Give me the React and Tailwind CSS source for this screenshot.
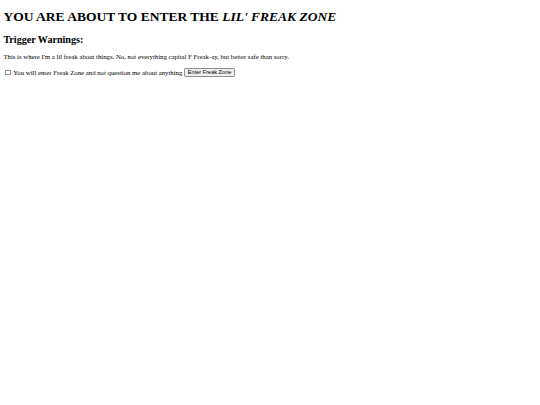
import { useState } from 'react';

export default function App() {
  const [agreed, setAgreed] = useState(false);

  return (
    <div className="min-h-[405px] bg-white p-[3.4px] text-[6.75px] text-black" style={{ fontFamily: '"Liberation Serif", "Times New Roman", serif' }}>
      <h1 className="mb-[9px] mt-[5.6px] text-[13.5px] font-bold leading-[1.15]">
        YOU ARE ABOUT TO ENTER THE <i>LIL' FREAK ZONE</i>
      </h1>
      <h2 className="my-[8.4px] text-[10.1px] font-bold leading-[1.15]">Trigger Warnings:</h2>
      <p className="my-[6.7px] leading-[1.15]">
        This is where I'm a lil freak about things. No, not everything capital F Freak-ay, but better safe than sorry.
      </p>
      <div className="flex items-center leading-[1.15]">
        <input
          type="checkbox"
          checked={agreed}
          onChange={(e) => setAgreed(e.target.checked)}
          className="my-[1.3px] ml-[1.7px] mr-[2.6px] h-[5.5px] w-[5.5px] appearance-none border-[0.6px] border-[#8f8f8f] bg-white"
        />
        <label>You will enter Freak Zone and not question me about anything</label>
        <button
          className="ml-[2px] h-[9px] rounded-[1.2px] border-[0.6px] border-[#8f8f8f] bg-[#efefef] px-[2.5px] text-[5.6px] leading-none"
          style={{ fontFamily: '"Liberation Sans", Arial, sans-serif' }}
        >
          Enter Freak Zone
        </button>
      </div>
    </div>
  );
}
